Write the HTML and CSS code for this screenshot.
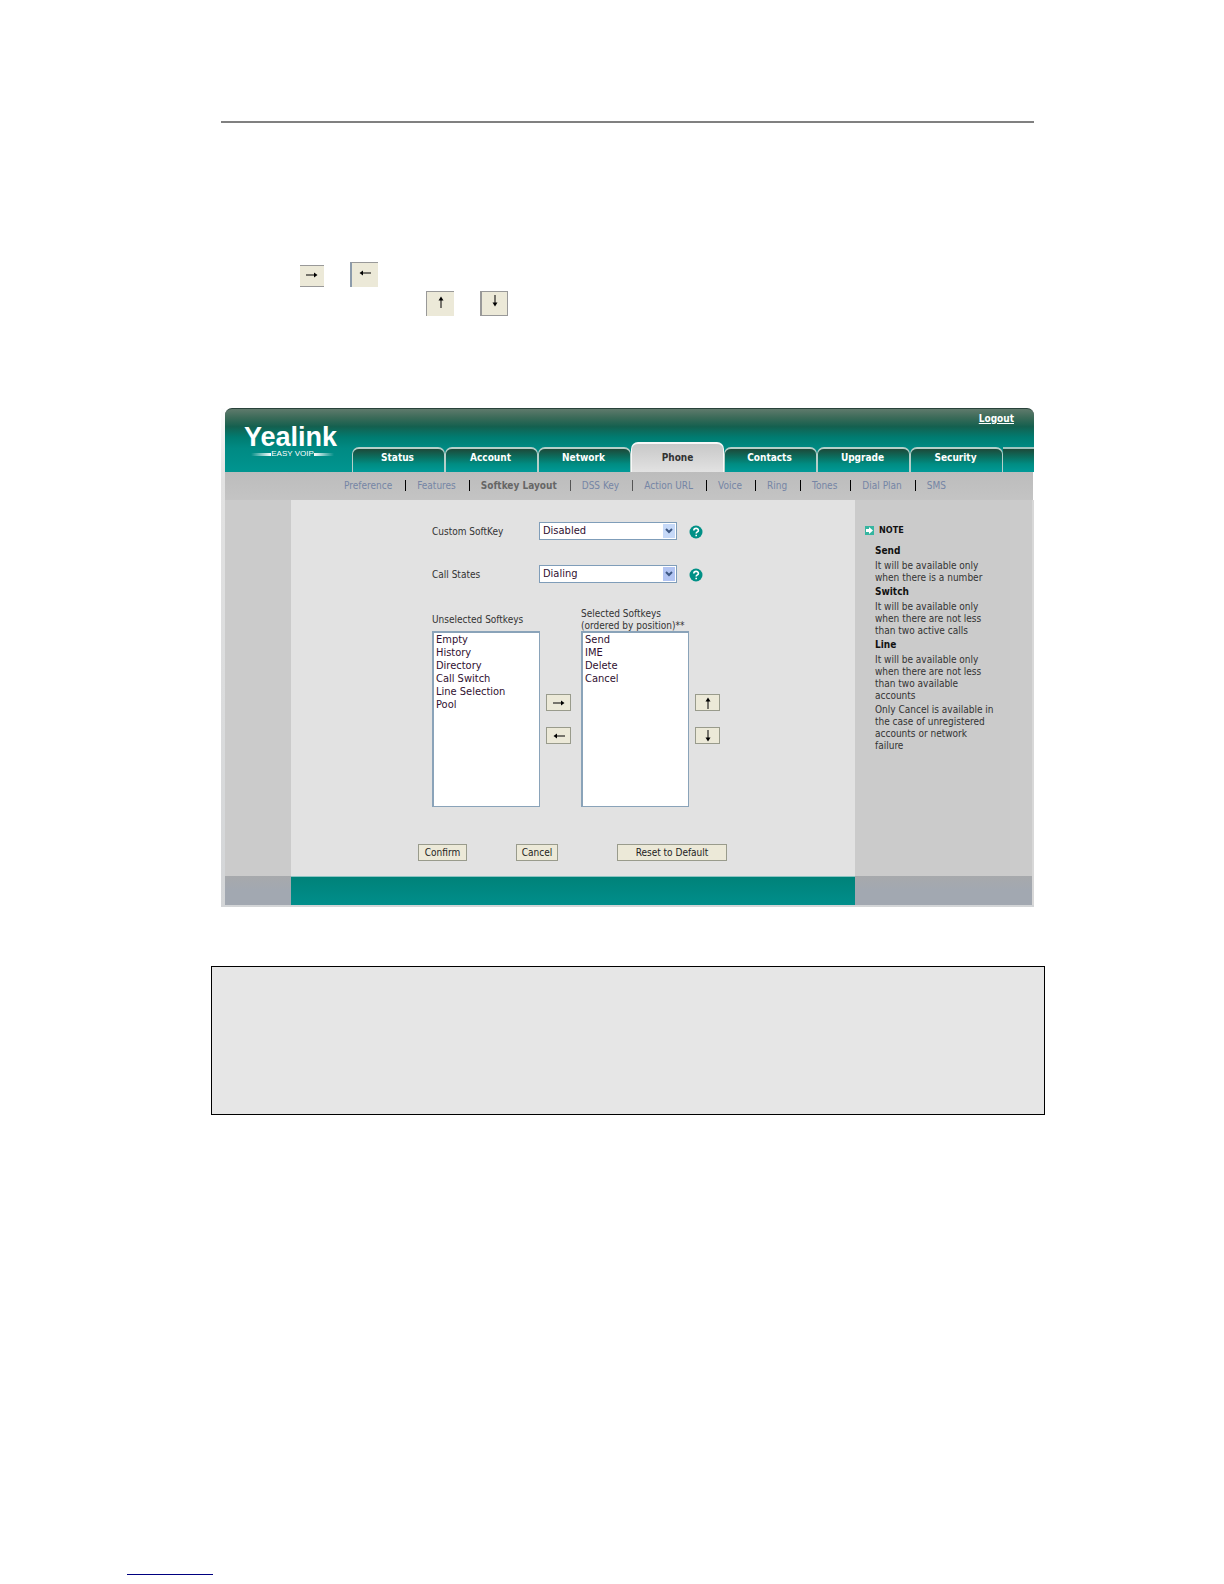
FILE: index.html
```html
<!DOCTYPE html><html lang="en"><head><meta charset="utf-8"/>
<meta name="viewport" content="width=device-width, initial-scale=1.0"/>
<title>Yealink - Softkey Layout</title>
<link rel="stylesheet" href="styles.css">
</head>
<body>

<svg class="defs" width="0" height="0">
  <symbol id="arrow" viewBox="0 0 12 8"><path d="M0 3.5H8V1.5L11.5 4L8 6.5V4.5H0z"/></symbol>
  <symbol id="varrow" viewBox="0 0 8 12"><path d="M3.5 12V4.5H1.5L4 0.5L6.5 4.5H4.5V12z"/></symbol>
  <symbol id="chevron" viewBox="0 0 12 14"><path d="M3 5L6 8L9 5" fill="none" stroke="#3f5985" stroke-width="2"/></symbol>
  <symbol id="help" viewBox="0 0 14 14"><circle cx="7" cy="7" r="6.5" fill="#009086"/><path d="M4.8 5.6C4.8 2.7 9.4 2.7 9.4 5.4C9.4 7 7.2 6.9 7.2 8.6M7.2 9.8V11.2" fill="none" stroke="#fff" stroke-width="1.6"/></symbol>
</svg>

<div class="page">
  <hr class="rule">

  <div class="samples">
    <div class="samplerow">
      <button class="sample right" aria-label="Add"><svg width="12" height="8"><use href="#arrow"/></svg></button>
      <button class="sample left" aria-label="Remove"><svg class="flip" width="12" height="8"><use href="#arrow"/></svg></button>
    </div>
    <div class="samplerow second">
      <button class="sample up" aria-label="Up"><svg width="8" height="12"><use href="#varrow"/></svg></button>
      <button class="sample down" aria-label="Down"><svg class="flip" width="8" height="12"><use href="#varrow"/></svg></button>
    </div>
  </div>

  <div class="phoneui">
    <header class="header">
      <div class="logo">
        <div class="brand">Yealink</div>
        <div class="tagline">EASY VOIP</div>
      </div>
      <div class="headright">
        <a class="logout" href="#">Logout</a>
        <nav class="tabs">
          <a class="tab" href="#">Status</a>
          <a class="tab" href="#">Account</a>
          <a class="tab" href="#">Network</a>
          <a class="tab active" href="#">Phone</a>
          <a class="tab" href="#">Contacts</a>
          <a class="tab" href="#">Upgrade</a>
          <a class="tab" href="#">Security</a>
          <span class="tabfill"></span>
        </nav>
      </div>
    </header>

    <nav class="subnav">
      <a href="#">Preference</a>
      <a href="#">Features</a>
      <a href="#" class="current">Softkey Layout</a>
      <a href="#" class="soft">DSS Key</a>
      <a href="#" class="soft">Action URL</a>
      <a href="#">Voice</a>
      <a href="#">Ring</a>
      <a href="#">Tones</a>
      <a href="#">Dial Plan</a>
      <a href="#">SMS</a>
    </nav>

    <div class="columns">
      <div class="side"></div>
      <main class="main">
        <form>
          <div class="fields">
            <label for="custom">Custom SoftKey</label>
            <div class="drop">
              <select id="custom"><option>Disabled</option><option>Enabled</option></select>
              <svg class="chevron" width="12" height="14"><use href="#chevron"/></svg>
            </div>
            <svg width="14" height="14"><use href="#help"/></svg>

            <label for="states">Call States</label>
            <div class="drop">
              <select id="states"><option>Dialing</option></select>
              <svg class="chevron dark" width="12" height="14"><use href="#chevron"/></svg>
            </div>
            <svg width="14" height="14"><use href="#help"/></svg>
          </div>

          <div class="lists">
            <div>
              <label class="listlabel" for="unselected">Unselected Softkeys</label>
              <select class="list" id="unselected" multiple>
                <option>Empty</option>
                <option>History</option>
                <option>Directory</option>
                <option>Call Switch</option>
                <option>Line Selection</option>
                <option>Pool</option>
              </select>
            </div>
            <div class="movers">
              <button type="button" class="btn" aria-label="Add"><svg width="12" height="8"><use href="#arrow"/></svg></button>
              <button type="button" class="btn" aria-label="Remove"><svg class="flip" width="12" height="8"><use href="#arrow"/></svg></button>
            </div>
            <div>
              <label class="listlabel" for="selected">Selected Softkeys<br>(ordered by position)**</label>
              <select class="list" id="selected" multiple>
                <option>Send</option>
                <option>IME</option>
                <option>Delete</option>
                <option>Cancel</option>
              </select>
            </div>
            <div class="movers">
              <button type="button" class="btn" aria-label="Move up"><svg width="8" height="12"><use href="#varrow"/></svg></button>
              <button type="button" class="btn" aria-label="Move down"><svg class="flip" width="8" height="12"><use href="#varrow"/></svg></button>
            </div>
          </div>

          <div class="actions">
            <button type="button" class="btn confirm">Confirm</button>
            <button type="button" class="btn cancel">Cancel</button>
            <button type="button" class="btn reset">Reset to Default</button>
          </div>
        </form>
      </main>
      <aside class="note">
        <div class="notehead">
          <svg width="9" height="9" viewBox="0 0 9 9"><path d="M0 0H9V9H0z" fill="#35b5a0"/><path d="M1 3H4V1L8 4.5L4 8V6H1z" fill="#fff"/></svg>
          NOTE
        </div>
        <div class="notebody">
          <h2>Send</h2>
          <p>It will be available only<br>when there is a number</p>
          <h2>Switch</h2>
          <p>It will be available only<br>when there are not less<br>than two active calls</p>
          <h2>Line</h2>
          <p>It will be available only<br>when there are not less<br>than two available<br>accounts</p>
          <p>Only Cancel is available in<br>the case of unregistered<br>accounts or network<br>failure</p>
        </div>
      </aside>
    </div>

    <footer class="columns foot">
      <div></div>
      <div class="footmain"></div>
      <div></div>
    </footer>
  </div>

  <div class="notebox"></div>
</div>
<div class="footline"></div>

</body>
</html>
```
FILE: styles.css
```css
* {
  box-sizing: border-box;
}
body {
  margin: 0;
  background: #fff;
  color: #333;
  font: 10px/12px "DejaVu Sans Condensed", "Noto Sans", sans-serif;
}
a {
  text-decoration: none;
}
.defs {
  display: block;
}
.page {
  padding: 121px 190px 0 221px;
}
.rule {
  height: 2px;
  margin: 0;
  border: 0;
  background: #808080;
}

/* arrow samples */
.samples {
  height: 285px;
  padding: 139px 0 0 79px;
}
.samplerow {
  display: flex;
  align-items: flex-end;
  gap: 26px;
  height: 25px;
}
.second {
  margin: 4px 0 0 126px;
}
.sample {
  width: 28px;
  height: 25px;
  padding: 0 0 5px;
  border: 0 solid #999;
  background: #ece9d8;
  line-height: 0;
}
.right {
  width: 24px;
  height: 22px;
  padding-bottom: 3px;
  border-width: 1px 0;
}
.left {
  border-top-width: 1px;
  border-left: 2px solid #8c9bab;
}
.up {
  border-width: 1px 0 0 1px;
}
.down {
  border-width: 1px 1px 1px 2px;
}
.flip {
  transform: rotate(180deg);
}

/* phone web ui */
.phoneui {
  border-left: 4px solid #e2e2e2;
  border-bottom: 2px solid #d3d5d7;
  border-image: linear-gradient(#fff, #e2e2e2 15%, #d3d5d7) 4;
}
.header {
  display: grid;
  grid-template-columns: 127px 1fr;
  height: 64px;
  border-top: 1px solid #29423b;
  border-radius: 7px 7px 0 0;
  background: linear-gradient(#5f7a6c, #3a6a58 14%, #14604f 28%, #007c71 45%, #008a83 62%, #009590);
  overflow: hidden;
}
.logo {
  width: 97px;
  margin: 16px 0 0 19px;
  color: #fff;
}
.brand {
  font: bold 27px/25px "Liberation Sans", sans-serif;
}
.tagline {
  display: flex;
  align-items: center;
  justify-content: center;
  margin: 0 7px;
  font: 8px/8px "Liberation Sans", sans-serif;
  white-space: nowrap;
}
.tagline::before, .tagline::after {
  content: "";
  flex: 1;
  height: 3px;
  background: linear-gradient(90deg, transparent, #fff);
}
.tagline::after {
  background: linear-gradient(270deg, transparent, #fff);
}
.headright {
  display: flex;
  flex-direction: column;
  justify-content: space-between;
}
.logout {
  align-self: flex-end;
  margin: 4px 20px 0 0;
  color: #fff;
  font-weight: bold;
  text-decoration: underline;
}
.tabs {
  display: flex;
  align-items: flex-end;
}
.tab {
  flex: 0 0 93px;
  height: 25px;
  padding: 3px 2px 0 0;
  border: 1px solid #b5cfc9;
  border-width: 2px 1px 0;
  border-radius: 7px 7px 0 0;
  background: linear-gradient(#1d4939, #0b6e5f 35%, #008c82 65%, #009a98);
  color: #fff;
  font-weight: bold;
  text-align: center;
}
.active {
  height: 30px;
  padding: 8px 0 0;
  border-color: #f8f8f8;
  background: linear-gradient(#c8c8c8, #e2e2e2);
  color: #333;
}
.tabfill {
  flex: 1;
  height: 25px;
  border-top: 2px solid #9fc4be;
  background: linear-gradient(#1d4939, #0b6e5f 35%, #008c82 65%, #009a98);
}
.subnav {
  display: flex;
  align-items: center;
  height: 28px;
  padding: 0 0 2px 107px;
  margin-right: 1px;
  background: linear-gradient(#bcbcbc, #c4c4c4);
}
.subnav a {
  padding: 0 13px 0 11px;
  border-left: 1px solid #000;
  color: #7585a5;
  line-height: 11px;
}
.subnav a:first-child {
  border-color: transparent;
}
.subnav .soft {
  border-color: #555;
}
.subnav .current {
  color: #666;
  font-weight: bold;
}
.columns {
  display: grid;
  grid-template-columns: 66px 1fr 177px;
  border-right: 2px solid #d8d8d8;
  background: #cbcbcb;
}
.main {
  padding: 22px 0 15px 127px;
  background: #e2e2e2;
}
.fields {
  display: grid;
  grid-template-columns: 107px 138px 14px;
  row-gap: 25px;
  align-items: center;
  margin-left: 14px;
}
.fields > label {
  padding-top: 2px;
}
.fields > svg {
  margin: 2px 0 0 12px;
}
.fields > svg, .movers svg {
  display: block;
}
.drop {
  display: grid;
  align-items: center;
}
.drop > * {
  grid-area: 1 / 1;
}
select {
  width: 100%;
  margin: 0;
  border: 1px solid #7f9db9;
  border-radius: 0;
  background: #fff;
  color: #301030;
  font: 11px/13px "DejaVu Sans Condensed", "Noto Sans", sans-serif;
}
.drop select {
  height: 18px;
  padding: 0 16px 1px 3px;
  appearance: none;
}
.chevron {
  justify-self: end;
  margin-right: 2px;
  background: #c6d9f8;
  pointer-events: none;
}
.dark {
  background: #b2c4f2;
}
.lists {
  display: flex;
  margin: 24px 0 0 14px;
}
.listlabel {
  display: flex;
  align-items: center;
  height: 24px;
  padding-top: 2px;
  white-space: nowrap;
}
.lists > div {
  flex: none;
  width: 108px;
}
.list {
  display: block;
  height: 176px;
  padding: 0 1px;
  border: 2px solid #8aa3b9;
  border-right-width: 1px;
  border-bottom-width: 1px;
  overflow: hidden;
}
.list option {
  min-height: 13px;
  padding: 0 1px;
  line-height: 13px;
}
.lists > .movers {
  display: flex;
  flex-direction: column;
  gap: 16px;
  width: 41px;
  padding: 87px 0 0 6px;
}
.btn {
  height: 17px;
  padding: 0;
  border: 1px solid #999b8c;
  border-radius: 0;
  background: #ece9d8;
  color: #222;
  font: inherit;
}
.movers .btn {
  display: flex;
  flex: none;
  align-items: center;
  justify-content: center;
  width: 25px;
}
.actions {
  display: flex;
  margin-top: 37px;
}
.confirm {
  width: 49px;
}
.cancel {
  width: 42px;
  margin: 0 59px 0 49px;
}
.reset {
  width: 110px;
}
.note {
  padding: 24px 8px 0 10px;
}
.notehead {
  display: flex;
  align-items: center;
  gap: 5px;
  color: #111;
  font-size: 9px;
  font-weight: bold;
}
.notebody {
  margin: 9px 0 0 10px;
}
h2 {
  margin: 0 0 3px;
  color: #111;
  font-size: 10px;
}
p {
  margin: 0 0 2px;
}
.foot {
  height: 29px;
  background: linear-gradient(#a7a9ac, #a2a8b1 50%);
}
.footmain {
  border-top: 1px solid #8cc4c2;
  background: linear-gradient(#008279, #008e8b);
}

/* grey box */
.notebox {
  height: 149px;
  margin: 59px -11px 0 -10px;
  border: 1px solid #000;
  background: #e6e6e6;
}
.footline {
  width: 86px;
  height: 1px;
  margin: 459px 0 8px 127px;
  background: #000080;
}
```
